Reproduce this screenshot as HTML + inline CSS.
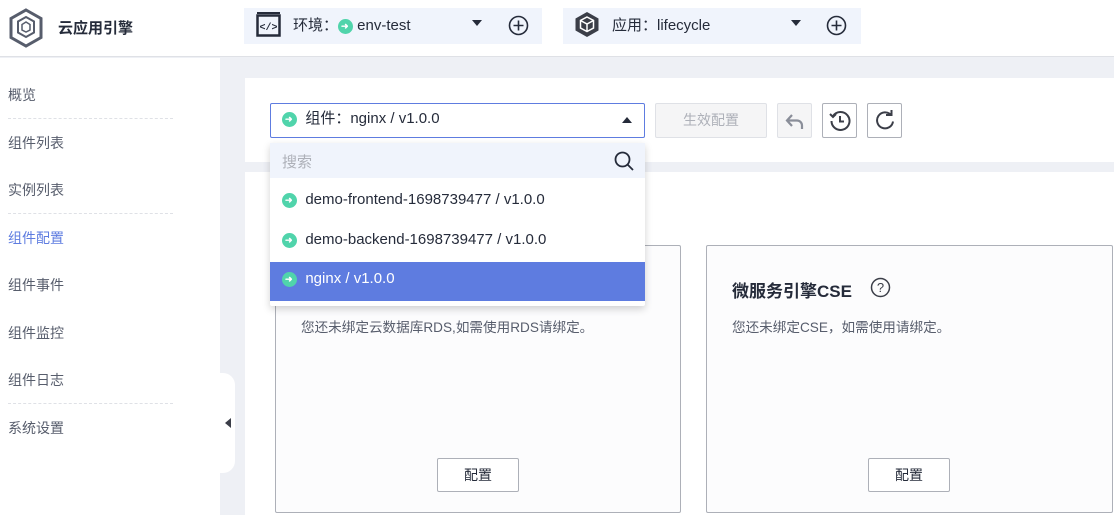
<!DOCTYPE html>
<html><head><meta charset="utf-8"><style>
*{box-sizing:border-box;margin:0;padding:0}
body{width:1114px;height:515px;overflow:hidden;background:#eef0f5;font-family:"Liberation Sans","Noto Sans CJK SC",sans-serif;font-size:14px;color:#252b3a;position:relative}
.abs{position:absolute}
.hdr{left:0;top:0;width:1114px;height:57px;background:#fff;border-bottom:1px solid #dfe1e6}
.side{left:0;top:58px;width:220px;height:457px;background:#fff}
.nav{position:absolute;left:8px;font-size:14px;color:#575d6c}
.dash{position:absolute;left:8px;width:165px;border-top:1px dashed #dfe1e6}
.sel{background:#f0f4fc;height:36px;top:8px}
.circ{width:18px;height:18px;border-radius:50%;background:#50d4ab;display:inline-block;position:relative;vertical-align:middle}
.circ:after{content:"➜";position:absolute;left:4px;top:1px;font-size:11px;color:#fff;font-weight:bold;line-height:16px}
.ci{width:15px;height:15px}
.ci:after{left:3px;top:0;font-size:9px;line-height:15px}
.btn{border:1px solid #adb0b8;background:#fff;border-radius:2px}
</style></head><body>
<div class="abs hdr"></div>
<svg class="abs" style="left:8px;top:8px" width="36" height="40" viewBox="0 0 36 40"><path d="M18 2 L33 10.5 V29.5 L18 38 L3 29.5 V10.5 Z" fill="none" stroke="#575d6c" stroke-width="3"/><path d="M18 9 L26 13.5 V24.5 L18 29 L10 24.5 V13.5 Z" fill="none" stroke="#575d6c" stroke-width="2"/><path d="M18 14 L22 16.5 V22 L18 24 L14 22 V16.5Z" fill="none" stroke="#575d6c" stroke-width="1.5"/></svg>
<div class="abs" style="left:58px;top:17px;font-size:15px;font-weight:bold;color:#252b3a">云应用引擎</div>

<div class="abs sel" style="left:244px;width:298px"></div>
<svg class="abs" style="left:256px;top:12px" width="26" height="25" viewBox="0 0 26 25"><rect x="1.5" y="3.5" width="22" height="20" fill="none" stroke="#252b3a" stroke-width="2.5"/><rect x="1" y="0" width="23" height="2" fill="#252b3a"/><text x="12.5" y="18" font-size="10" text-anchor="middle" font-family="Liberation Mono" font-weight="bold" fill="#252b3a">&lt;/&gt;</text></svg>
<div class="abs" style="left:293px;top:14px;font-size:15px">环境：<span class="circ ci"></span> env-test</div>
<div class="abs" style="left:472px;top:20px;width:0;height:0;border-left:5px solid transparent;border-right:5px solid transparent;border-top:6px solid #252b3a"></div>
<svg class="abs" style="left:508px;top:15px" width="21" height="21"><circle cx="10.5" cy="10.5" r="9" fill="none" stroke="#252b3a" stroke-width="1.6"/><path d="M10.5 5.5v10M5.5 10.5h10" stroke="#252b3a" stroke-width="1.6"/></svg>

<div class="abs sel" style="left:563px;width:298px"></div>
<svg class="abs" style="left:574px;top:11px" width="26" height="27" viewBox="0 0 26 27"><path d="M13 1 L24.5 7.5 V19.5 L13 26 L1.5 19.5 V7.5Z" fill="#3b3e48"/><path d="M13 6 L19.5 9.5 V17 L13 20.5 L6.5 17 V9.5Z M6.5 9.5 L13 13 L19.5 9.5 M13 13 V20.5" fill="none" stroke="#fff" stroke-width="1.5"/></svg>
<div class="abs" style="left:612px;top:14px;font-size:15px">应用：lifecycle</div>
<div class="abs" style="left:791px;top:20px;width:0;height:0;border-left:5px solid transparent;border-right:5px solid transparent;border-top:6px solid #252b3a"></div>
<svg class="abs" style="left:826px;top:15px" width="21" height="21"><circle cx="10.5" cy="10.5" r="9" fill="none" stroke="#252b3a" stroke-width="1.6"/><path d="M10.5 5.5v10M5.5 10.5h10" stroke="#252b3a" stroke-width="1.6"/></svg>

<div class="abs side"></div>
<div class="nav" style="top:85px">概览</div>
<div class="dash" style="top:118px"></div>
<div class="nav" style="top:133px">组件列表</div>
<div class="nav" style="top:180px">实例列表</div>
<div class="dash" style="top:213px"></div>
<div class="nav" style="top:228px;color:#5e7ce0">组件配置</div>
<div class="nav" style="top:275px">组件事件</div>
<div class="nav" style="top:323px">组件监控</div>
<div class="nav" style="top:370px">组件日志</div>
<div class="dash" style="top:403px"></div>
<div class="nav" style="top:418px">系统设置</div>
<div class="abs" style="left:205px;top:373px;width:30px;height:100px;background:#fff;border-radius:12px"></div>
<div class="abs" style="left:225px;top:418px;width:0;height:0;border-top:5px solid transparent;border-bottom:5px solid transparent;border-right:6px solid #3b3e48"></div>

<div class="abs" style="left:245px;top:78px;width:869px;height:84px;background:#fff"></div>
<div class="abs" style="left:245px;top:172px;width:869px;height:343px;background:#fff"></div>

<div class="abs" style="left:275px;top:245px;width:406px;height:268px;border:1px solid #adb0b8;border-radius:2px;background:#fcfcfd"></div>
<div class="abs" style="left:301px;top:316px;font-size:13.6px;color:#575d6c">您还未绑定云数据库RDS,如需使用RDS请绑定。</div>
<div class="abs btn" style="left:437px;top:458px;width:82px;height:34px;text-align:center;line-height:32px">配置</div>
<div class="abs" style="left:706px;top:245px;width:407px;height:268px;border:1px solid #adb0b8;border-radius:2px;background:#fcfcfd"></div>
<div class="abs" style="left:732px;top:277px;font-size:17px;font-weight:bold">微服务引擎CSE</div>
<svg class="abs" style="left:870px;top:277px" width="21" height="21"><circle cx="10.5" cy="10.5" r="9" fill="none" stroke="#3b3e48" stroke-width="1.5"/><text x="10.5" y="15" font-size="13" text-anchor="middle" fill="#3b3e48" font-family="Liberation Sans">?</text></svg>
<div class="abs" style="left:732px;top:316px;font-size:13.6px;color:#575d6c">您还未绑定CSE，如需使用请绑定。</div>
<div class="abs btn" style="left:868px;top:458px;width:82px;height:34px;text-align:center;line-height:32px">配置</div>

<div class="abs" style="left:270px;top:103px;width:375px;height:35px;border:1px solid #5e7ce0;border-radius:2px;background:#fff"></div>
<div class="abs" style="left:282px;top:110px;line-height:18px;font-size:15px"><span class="circ ci"></span> &nbsp;组件：nginx / v1.0.0</div>
<div class="abs" style="left:622px;top:117px;width:0;height:0;border-left:5px solid transparent;border-right:5px solid transparent;border-bottom:6px solid #252b3a"></div>
<div class="abs" style="left:655px;top:103px;width:112px;height:35px;border:1px solid #dfe1e6;background:#f5f5f6;border-radius:2px;color:#adb0b8;text-align:center;line-height:33px">生效配置</div>
<div class="abs" style="left:777px;top:103px;width:35px;height:35px;border:1px solid #dfe1e6;background:#f5f5f6;border-radius:2px"></div>
<svg class="abs" style="left:784px;top:110px" width="22" height="22"><path d="M8 5 L3 10.5 L8 16 M3 10.5 H13 a5 5 0 0 1 5 5 V19" fill="none" stroke="#8a8e99" stroke-width="2.2"/></svg>
<div class="abs btn" style="left:822px;top:103px;width:35px;height:35px"></div>
<svg class="abs" style="left:828px;top:109px" width="24" height="24"><path d="M5 7 A9 9 0 1 1 3.5 12" fill="none" stroke="#3b3e48" stroke-width="2"/><path d="M2 5 L5 8 L8 5" fill="none" stroke="#3b3e48" stroke-width="2"/><path d="M12 7v5.5h4" fill="none" stroke="#3b3e48" stroke-width="2"/></svg>
<div class="abs btn" style="left:867px;top:103px;width:35px;height:35px"></div>
<svg class="abs" style="left:873px;top:109px" width="24" height="24"><path d="M18 6 A8 8 0 1 0 20 12.5" fill="none" stroke="#3b3e48" stroke-width="2"/><path d="M13 6 H18.5 V1" fill="none" stroke="#3b3e48" stroke-width="2"/></svg>

<div class="abs" style="left:270px;top:143px;width:375px;height:163px;background:#fff;box-shadow:0 3px 8px rgba(0,0,0,.18);border-radius:2px"></div>
<div class="abs" style="left:270px;top:143px;width:375px;height:35px;background:#f0f4fc"></div>
<div class="abs" style="left:282px;top:151px;color:#adb0b8;font-size:15px">搜索</div>
<svg class="abs" style="left:613px;top:150px" width="22" height="22"><circle cx="9.5" cy="9.5" r="7" fill="none" stroke="#252b3a" stroke-width="1.8"/><path d="M14.5 14.5 L20 20" stroke="#252b3a" stroke-width="1.8"/></svg>
<div class="abs" style="left:282px;top:191px;line-height:18px;font-size:15px"><span class="circ ci"></span> &nbsp;demo-frontend-1698739477 / v1.0.0</div>
<div class="abs" style="left:282px;top:231px;line-height:18px;font-size:15px"><span class="circ ci"></span> &nbsp;demo-backend-1698739477 / v1.0.0</div>
<div class="abs" style="left:270px;top:262px;width:375px;height:39px;background:#5e7ce0"></div>
<div class="abs" style="left:282px;top:270px;line-height:18px;color:#fff;font-size:15px"><span class="circ ci"></span> &nbsp;nginx / v1.0.0</div>
</body></html>
